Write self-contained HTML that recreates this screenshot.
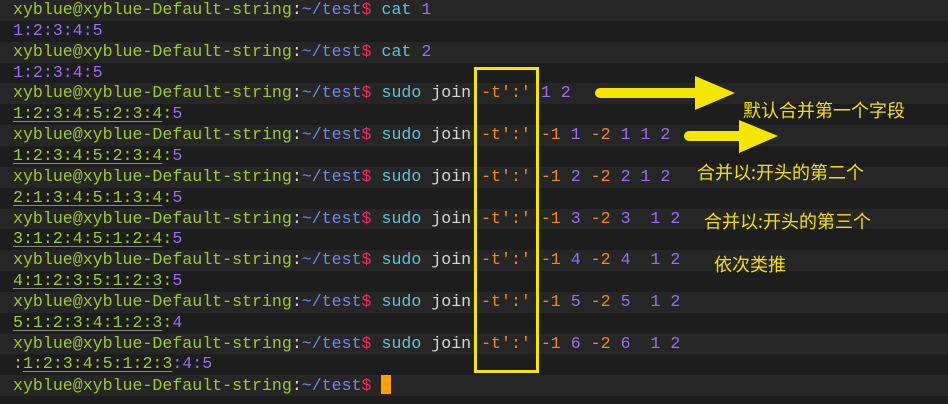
<!DOCTYPE html>
<html><head><meta charset="utf-8"><style>
body{margin:0;width:948px;height:404px;background:#1d1d1d;overflow:hidden;position:relative;font-family:"Liberation Mono",monospace;}
.r{position:absolute;left:0;width:948px;height:20.85px;line-height:20.85px;font-size:16.6px;white-space:pre;padding-left:13px;box-sizing:border-box;color:#d6d6d6}
.s{background:#262626}
.g{color:#9ecb2a}.b{color:#6f88e8}.d{color:#f0285e}.c{color:#5cc3d9}.w{color:#d8d8d8}.o{color:#f08a1e}.p{color:#9b6cf0}
.u{text-decoration:underline;text-decoration-color:#888;text-underline-offset:3px}
.cn{position:absolute;color:#f5e000;font-family:"Noto Sans CJK SC",sans-serif;font-size:18px;line-height:22px;white-space:nowrap}
</style></head><body>
<div class="r s" style="top:0"><span class="g">xyblue@xyblue-Default-string</span><span class="w">:</span><span class="b">~/test</span><span class="d">$</span> <span class="c">cat</span> <span class="p">1</span></div>
<div class="r" style="top:20.85px"><span class="p">1:2:3:4:5</span></div>
<div class="r s" style="top:41.7px"><span class="g">xyblue@xyblue-Default-string</span><span class="w">:</span><span class="b">~/test</span><span class="d">$</span> <span class="c">cat</span> <span class="p">2</span></div>
<div class="r" style="top:62.55px"><span class="p">1:2:3:4:5</span></div>
<div class="r s" style="top:83.4px"><span class="g">xyblue@xyblue-Default-string</span><span class="w">:</span><span class="b">~/test</span><span class="d">$</span> <span class="c">sudo</span> join <span class="o">-t':'</span> <span class="p">1 2</span></div>
<div class="r" style="top:104.25px"><span class="g u">1:2:3:4:5:2:3:4</span><span class="g">:</span><span class="p">5</span></div>
<div class="r s" style="top:125.1px"><span class="g">xyblue@xyblue-Default-string</span><span class="w">:</span><span class="b">~/test</span><span class="d">$</span> <span class="c">sudo</span> join <span class="o">-t':'</span> <span class="o">-1</span> <span class="p">1</span> <span class="o">-2</span> <span class="p">1 1 2</span></div>
<div class="r" style="top:145.95px"><span class="g u">1:2:3:4:5:2:3:4</span><span class="g">:</span><span class="p">5</span></div>
<div class="r s" style="top:166.8px"><span class="g">xyblue@xyblue-Default-string</span><span class="w">:</span><span class="b">~/test</span><span class="d">$</span> <span class="c">sudo</span> join <span class="o">-t':'</span> <span class="o">-1</span> <span class="p">2</span> <span class="o">-2</span> <span class="p">2 1 2</span></div>
<div class="r" style="top:187.65px"><span class="g u">2:1:3:4:5:1:3:4</span><span class="g">:</span><span class="p">5</span></div>
<div class="r s" style="top:208.5px"><span class="g">xyblue@xyblue-Default-string</span><span class="w">:</span><span class="b">~/test</span><span class="d">$</span> <span class="c">sudo</span> join <span class="o">-t':'</span> <span class="o">-1</span> <span class="p">3</span> <span class="o">-2</span> <span class="p">3  1 2</span></div>
<div class="r" style="top:229.35px"><span class="g u">3:1:2:4:5:1:2:4</span><span class="g">:</span><span class="p">5</span></div>
<div class="r s" style="top:250.2px"><span class="g">xyblue@xyblue-Default-string</span><span class="w">:</span><span class="b">~/test</span><span class="d">$</span> <span class="c">sudo</span> join <span class="o">-t':'</span> <span class="o">-1</span> <span class="p">4</span> <span class="o">-2</span> <span class="p">4  1 2</span></div>
<div class="r" style="top:271.05px"><span class="g u">4:1:2:3:5:1:2:3</span><span class="g">:</span><span class="p">5</span></div>
<div class="r s" style="top:291.9px"><span class="g">xyblue@xyblue-Default-string</span><span class="w">:</span><span class="b">~/test</span><span class="d">$</span> <span class="c">sudo</span> join <span class="o">-t':'</span> <span class="o">-1</span> <span class="p">5</span> <span class="o">-2</span> <span class="p">5  1 2</span></div>
<div class="r" style="top:312.75px"><span class="g u">5:1:2:3:4:1:2:3</span><span class="g">:</span><span class="p">4</span></div>
<div class="r s" style="top:333.6px"><span class="g">xyblue@xyblue-Default-string</span><span class="w">:</span><span class="b">~/test</span><span class="d">$</span> <span class="c">sudo</span> join <span class="o">-t':'</span> <span class="o">-1</span> <span class="p">6</span> <span class="o">-2</span> <span class="p">6  1 2</span></div>
<div class="r" style="top:354.45px"><span class="g">:</span><span class="g u">1:2:3:4:5:1:2:3</span><span class="p">:4:5</span></div>
<div class="r s" style="top:375.3px"><span class="g">xyblue@xyblue-Default-string</span><span class="w">:</span><span class="b">~/test</span><span class="d">$</span> <span style="display:inline-block;width:10px;height:19px;background:#ffa000;vertical-align:-4px"></span></div>

<div style="position:absolute;left:474px;top:67px;width:59px;height:300px;border:3px solid #f5e600;"></div>
<svg style="position:absolute;left:0;top:0" width="948" height="404">
<line x1="600" y1="93" x2="700" y2="93" stroke="#f5e600" stroke-width="10" stroke-linecap="round"/>
<polygon points="695,76 735,93 695,110" fill="#f5e600"/>
<line x1="689" y1="136" x2="745" y2="136" stroke="#f5e600" stroke-width="10" stroke-linecap="round"/>
<polygon points="739,120 778,136 739,153" fill="#f5e600"/>
</svg>
<div class="cn" style="left:743px;top:99px">默认合并第一个字段</div>
<div class="cn" style="left:697px;top:161px">合并以:开头的第二个</div>
<div class="cn" style="left:704px;top:210px">合并以:开头的第三个</div>
<div class="cn" style="left:714px;top:253px">依次类推</div>
</body></html>
